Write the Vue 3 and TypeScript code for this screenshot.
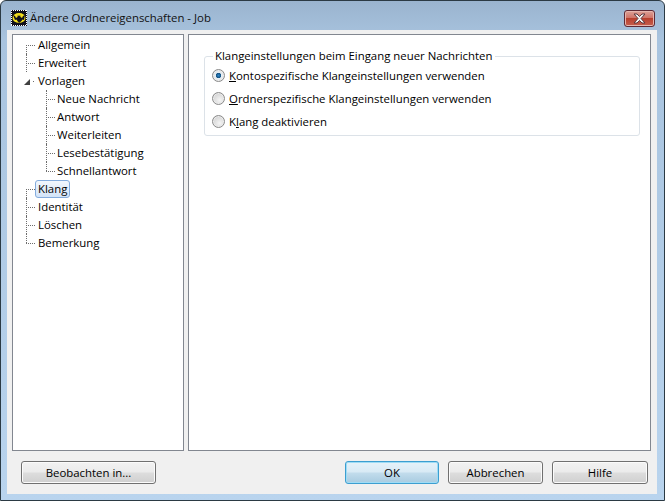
<script setup lang="ts">
import { ref } from 'vue'

type Node = { label: string; level: number; start?: boolean; end?: boolean; last?: boolean }

const nodes: Node[] = [
  { label: 'Allgemein', level: 0, start: true },
  { label: 'Erweitert', level: 0 },
  { label: 'Vorlagen', level: 0, end: true },
  { label: 'Neue Nachricht', level: 1 },
  { label: 'Antwort', level: 1 },
  { label: 'Weiterleiten', level: 1 },
  { label: 'Lesebestätigung', level: 1 },
  { label: 'Schnellantwort', level: 1, last: true },
  { label: 'Klang', level: 0, start: true },
  { label: 'Identität', level: 0 },
  { label: 'Löschen', level: 0 },
  { label: 'Bemerkung', level: 0, last: true },
]

const selected = ref('Klang')
const sound = ref('konto')
</script>

<template>
  <div class="window">
    <header class="titlebar">
      <svg class="app-icon" width="16" height="16" viewBox="0 0 16 16">
        <rect width="16" height="16" fill="#10101c" />
        <path d="M0 .5h16M0 15.500h16M.5 0v16M15.500 0v16" stroke="#fff" stroke-width="1" stroke-dasharray="1 1" />
        <ellipse cx="8" cy="8" rx="6.500" ry="5" fill="#f5e01e" />
        <path d="M2 5l2 1 1 2 1.500-1L7 4.500 7.500 6h1L9 4.500 9.500 7l1.500 1 1-2 2-1-1 5-1.500-.5-1 1.500L8 13l-1.500-2-1-1.500L4 10z" fill="#10101c" />
      </svg>
      <span class="title">Ändere Ordnereigenschaften - Job</span>
      <button class="close" aria-label="Schließen">
        <svg width="17" height="11" viewBox="0 0 17 11">
          <path d="M3 1h3l2.500 2.500L11 1h3L10 5.500l4 4.500h-3L8.500 7.500 6 10H3l4-4.500z" fill="#f2f2f2" stroke="#5a3a40" stroke-width="1" stroke-linejoin="round" />
        </svg>
      </button>
    </header>

    <div class="client">
      <div class="panes">
        <ul class="tree">
          <li
            v-for="node in nodes"
            :key="node.label"
            class="row"
            :class="[`level-${node.level}`, { start: node.start, end: node.end, last: node.last }]"
            @click="selected = node.label"
          >
            <span v-if="node.end" class="arrow"></span>
            <span class="label" :class="{ selected: selected === node.label }">{{ node.label }}</span>
          </li>
        </ul>

        <main class="page">
          <fieldset class="group">
            <legend>Klangeinstellungen beim Eingang neuer Nachrichten</legend>
            <label class="radio">
              <input v-model="sound" type="radio" value="konto" />
              <span class="dot"></span>
              <span><u>K</u>ontospezifische Klangeinstellungen verwenden</span>
            </label>
            <label class="radio">
              <input v-model="sound" type="radio" value="ordner" />
              <span class="dot"></span>
              <span><u>O</u>rdnerspezifische Klangeinstellungen verwenden</span>
            </label>
            <label class="radio">
              <input v-model="sound" type="radio" value="aus" />
              <span class="dot"></span>
              <span>K<u>l</u>ang deaktivieren</span>
            </label>
          </fieldset>
        </main>
      </div>

      <footer class="actions">
        <button class="btn watch">Beobachten in...</button>
        <div class="spacer"></div>
        <button class="btn ok">OK</button>
        <button class="btn">Abbrechen</button>
        <button class="btn help">Hilfe</button>
      </footer>
    </div>
  </div>
</template>

<style>
html,
body {
  margin: 0;
  background: #fff;
}
</style>

<style scoped>
.window {
  width: 665px;
  height: 501px;
  box-sizing: border-box;
  display: flex;
  flex-direction: column;
  padding: 0 7px 6px 6px;
  border: 1px solid #2b3a44;
  border-radius: 6px 6px 0 0;
  background: linear-gradient(180deg, #9ab4cf 0, #a9c4df 40px, #b9d4ee 100%);
  font-family: "Open Sans", "Noto Sans", sans-serif;
  font-size: 11.4px;
  color: #000;
}

.titlebar {
  height: 29px;
  box-sizing: border-box;
  flex: none;
  display: flex;
  align-items: center;
  padding: 4px 0 0 4px;
}

.app-icon {
  flex: none;
  margin-right: 3px;
}

.title {
  flex: 1;
  color: #111;
}

.close {
  width: 31px;
  height: 17px;
  align-self: flex-start;
  margin: 5px 2px 0 0;
  padding: 0;
  display: flex;
  align-items: center;
  justify-content: center;
  border: 1px solid #5e2a35;
  border-radius: 3px;
  background: linear-gradient(180deg, #dda298 0, #cf7468 45%, #b8402e 50%, #c65f4e 100%);
  box-shadow: inset 0 0 0 1px #e6b6ae;
}

.client {
  flex: 1;
  min-height: 0;
  display: flex;
  flex-direction: column;
  box-sizing: border-box;
  padding: 4px 6px 9px 5px;
  background: #f0f0f0;
}

.panes {
  height: 417px;
  flex: none;
  display: flex;
  gap: 4px;
}

.tree {
  width: 172px;
  box-sizing: border-box;
  margin: 0;
  padding: 1px 0 0;
  list-style: none;
  background: #fff;
  border: 1px solid #828790;
}

.row {
  position: relative;
  height: 18px;
  display: flex;
  align-items: center;
}

/* dotted connectors of the tree */
.row::before {
  content: '';
  position: absolute;
  top: 9px;
  height: 0;
  width: 9px;
  border-top: 1px dotted #6d6d6d;
}

.row::after {
  content: '';
  position: absolute;
  top: 0;
  height: 18px;
  border-left: 1px dotted #6d6d6d;
}

.row.last::after {
  height: 9px;
}

.row.start::after {
  top: 9px;
  height: 9px;
}

.row.end::after {
  display: none;
}

.level-0 {
  padding-left: 22px;
}

.level-0::before,
.level-0::after {
  left: 13px;
}

.level-1 {
  padding-left: 41px;
}

.level-1::before,
.level-1::after {
  left: 33px;
}

.row.end::before {
  left: 20px;
  width: 1px;
}

.arrow {
  position: absolute;
  z-index: 1;
  left: 11px;
  top: 7px;
  width: 0;
  height: 0;
  border-style: solid;
  border-width: 0 0 6px 6px;
  border-color: transparent transparent #404040 transparent;
}

.label {
  padding: 0 2px;
  line-height: 16px;
  border: 1px solid transparent;
  border-radius: 3px;
  white-space: nowrap;
}

.label.selected {
  border-color: #84acdd;
  background: linear-gradient(180deg, #f2f7fd, #d3e4f8);
}

.page {
  flex: 1;
  box-sizing: border-box;
  padding: 13px 10px 0 15px;
  background: #fff;
  border: 1px solid #828790;
}

.group {
  margin: 0;
  padding: 0 0 6px 7px;
  min-width: 0;
  height: 88px;
  box-sizing: border-box;
  border: 1px solid #dce2e8;
  border-radius: 3px;
}

legend {
  padding: 0 3px 0 2px;
  margin-left: 1px;
  line-height: 16px;
}

.radio {
  height: 23px;
  display: flex;
  align-items: center;
  gap: 4px;
  white-space: nowrap;
}

.radio input {
  position: absolute;
  opacity: 0;
  width: 0;
  height: 0;
  margin: 0;
}

.dot {
  width: 11px;
  height: 11px;
  flex: none;
  border: 1px solid #8a8a8a;
  border-radius: 50%;
  background: radial-gradient(circle at 60% 65%, #f5f5f5 0, #dadada 60%, #b5b5b5 100%);
  box-shadow: inset 0 0 0 1px #ececec;
}

.radio input:checked + .dot {
  background: radial-gradient(circle, #2f86c8 0, #14507f 32%, #e8eef3 38%, #d0d6da 100%);
}

.actions {
  display: flex;
  align-items: flex-start;
  gap: 9px;
  padding: 10px 0 0 9px;
}

.spacer {
  width: 171px;
}

.btn {
  width: 95px;
  height: 23px;
  padding: 0;
  font: inherit;
  color: #000;
  border: 1px solid #707070;
  border-radius: 3px;
  background: linear-gradient(180deg, #f2f2f2 0, #ebebeb 48%, #dddddd 52%, #cfcfcf 100%);
  box-shadow: inset 0 0 0 1px #fbfbfb;
}

.watch {
  width: 135px;
}

.ok {
  width: 94px;
  border-color: #3c9ed0;
  background: linear-gradient(180deg, #e6f2f9 0, #d8eaf5 48%, #c2dcec 52%, #a8cbe0 100%);
  box-shadow: inset 0 0 0 1px #9fdcf5;
}

.help {
  width: 96px;
}
</style>
